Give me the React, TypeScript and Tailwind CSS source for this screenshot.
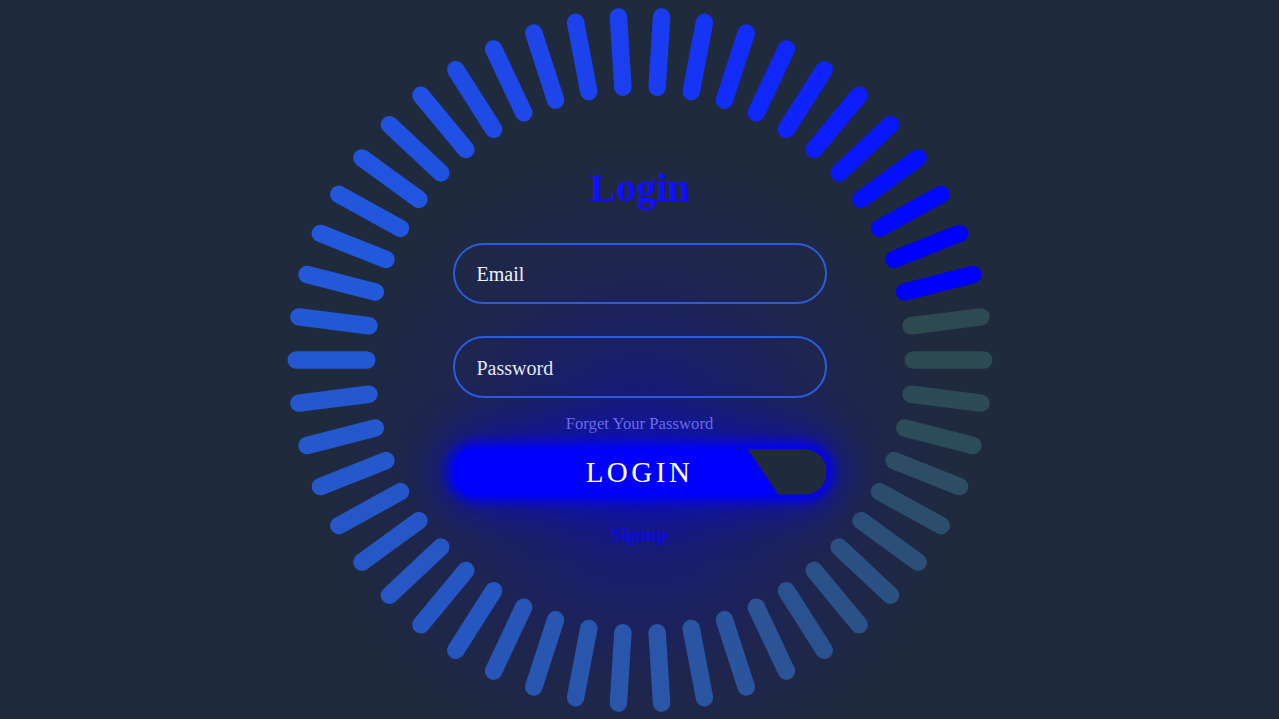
import React from 'react';

// colour stops by "age" of a bar (0 = the one that just blinked)
const stops: [number, string][] = [
  [0, '#0000ff'],
  [1, '#0000ff'],
  [2, '#0208ff'],
  [5, '#0c1eff'],
  [8, '#122cfa'],
  [10, '#1a3cf0'],
  [14, '#1e48e8'],
  [17, '#2052e0'],
  [20, '#2258dc'],
  [23, '#2458d2'],
  [25, '#2558cc'],
  [31, '#2656c0'],
  [33, '#2856b0'],
  [36, '#2a55a8'],
  [38, '#2a549c'],
  [40, '#2b5290'],
  [42, '#2b5082'],
  [44, '#2b4e6c'],
  [46, '#2c4c5a'],
  [48, '#2c4a52'],
  [49, '#2c4a50'],
];

const hex = (c: string) => [1, 3, 5].map((i) => parseInt(c.slice(i, i + 2), 16));

const colorAt = (age: number) => {
  for (let i = 0; i < stops.length - 1; i++) {
    const [a0, c0] = stops[i];
    const [a1, c1] = stops[i + 1];
    if (age >= a0 && age <= a1) {
      const t = (age - a0) / (a1 - a0 || 1);
      const p = hex(c0);
      const q = hex(c1);
      const m = p.map((v, k) => Math.round(v + (q[k] - v) * t));
      return `rgb(${m[0]},${m[1]},${m[2]})`;
    }
  }
  return stops[stops.length - 1][1];
};

const Ring: React.FC = () => {
  const bars = Array.from({ length: 50 }, (_, i) => {
    const deg = 3.6 + i * 7.2;
    const rad = (deg * Math.PI) / 180;
    const age = (((75.6 - deg) / 7.2) % 50 + 50) % 50;
    const r1 = 273.25;
    const r2 = 343.75;
    return {
      x1: 360 + r1 * Math.sin(rad),
      y1: 360 - r1 * Math.cos(rad),
      x2: 360 + r2 * Math.sin(rad),
      y2: 360 - r2 * Math.cos(rad),
      color: colorAt(Math.round(age)),
    };
  });

  return (
    <svg className="absolute inset-0" width="720" height="720" viewBox="0 0 720 720">
      {bars.map((b, i) => (
        <line
          key={i}
          x1={b.x1}
          y1={b.y1}
          x2={b.x2}
          y2={b.y2}
          stroke={b.color}
          strokeWidth={17.5}
          strokeLinecap="round"
        />
      ))}
    </svg>
  );
};

export default function App() {
  return (
    <div className="h-screen w-full overflow-hidden bg-[#1f2a3d] flex items-center justify-center font-['Liberation_Serif',serif]">
      <div className="relative w-[720px] h-[720px] shrink-0 flex justify-center bg-[radial-gradient(circle_at_360px_470px,#13178e_0px,#171b7a_70px,#1b2064_130px,#1e2550_200px,#1f2a3d_320px)]">
        <Ring />

        <form className="relative z-10 w-[374px] flex flex-col items-center pt-[168px]" onSubmit={(e) => e.preventDefault()}>
          <h2 className="text-[40px] leading-[40px] font-bold text-[#1010ff]">Login</h2>

          <input
            type="text"
            placeholder="Email"
            className="mt-[35px] w-full h-[61px] rounded-full border-2 border-[#2b5cdb] bg-transparent px-[22px] pt-[2px] text-[20px] text-white placeholder:text-[#eef2ff] outline-none"
          />
          <input
            type="password"
            placeholder="Password"
            className="mt-[32px] w-full h-[62px] rounded-full border-2 border-[#2b5cdb] bg-transparent px-[22px] pt-[3px] text-[20px] text-white placeholder:text-[#e4e8f8] outline-none"
          />

          <a className="mt-[16px] text-[16.7px] leading-[20px] text-[#7b7fe8]">Forget Your Password</a>

          <button
            type="submit"
            className="relative mt-[15px] w-full h-[46px] rounded-full bg-[#0000ff] shadow-[0_0_12px_6px_#0000ff,0_0_44px_16px_rgba(0,0,255,0.45)] text-white text-[29px] tracking-[3.5px] leading-[46px]"
          >
            LOGIN
            <span className="absolute right-0 top-0 h-full w-[79.5px] rounded-r-full bg-[#1f2a3d] [clip-path:polygon(0_0,100%_0,100%_100%,31.5px_100%)]" />
          </button>

          <a className="mt-[28px] text-[19px] leading-[24px] font-bold text-[#0c0ce0]">Signup</a>
        </form>
      </div>
    </div>
  );
}
